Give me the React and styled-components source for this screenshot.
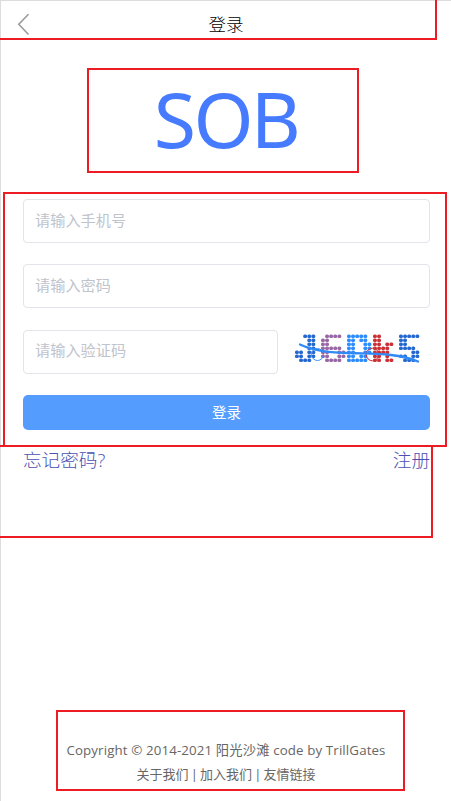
import React from "react";
import styled, { createGlobalStyle } from "styled-components";

const RED = "#ed1c24";

const GlobalStyle = createGlobalStyle`
  *, *::before, *::after { box-sizing: border-box; }
  body {
    margin: 0;
    background: #fff;
    font-family: "Open Sans", "Noto Sans CJK SC", sans-serif;
  }
`;

const Page = styled.main`
  width: 451px;
  height: 801px;
  overflow: hidden;
  display: flex;
  flex-direction: column;
  background:
    linear-gradient(#dcdcdc, #dcdcdc) 0 0 / 100% 1px no-repeat,
    linear-gradient(#dcdcdc, #dcdcdc) 0 0 / 1px 100% no-repeat,
    #fff;
`;

const Header = styled.header`
  width: 437px;
  height: 40px;
  flex: none;
  display: grid;
  grid-template-columns: 48px 1fr 31px;
  align-items: center;
  padding-top: 9px;
  border: solid ${RED};
  border-width: 0 2px 2px 0;
`;

const BackButton = styled.button`
  display: flex;
  padding: 0 0 0 17px;
  border: 0;
  background: none;
`;

const Title = styled.h1`
  margin: 0;
  text-align: center;
  font-size: 17.5px;
  line-height: 28px;
  font-weight: 300;
  color: #000;
`;

const LogoFrame = styled.section`
  width: 272px;
  height: 105px;
  flex: none;
  margin: 28px 0 0 87px;
  padding: 0 0 4px 6px;
  display: flex;
  align-items: center;
  justify-content: center;
  border: 2px solid ${RED};
`;

const Logo = styled.span`
  font-family: "Noto Sans", sans-serif;
  font-size: 77px;
  line-height: 97px;
  letter-spacing: -2.7px;
  color: #467bff;
`;

const Form = styled.form`
  width: 444px;
  height: 255px;
  flex: none;
  margin: 19px 0 0 3px;
  padding: 5px 15px 0 18px;
  border: 2px solid ${RED};
`;

const Field = styled.input`
  display: block;
  width: ${(p) => p.$width || "100%"};
  height: 44px;
  flex: none;
  margin: 0 0 21.3px;
  padding: 0 11px 5px;
  border: 1px solid #e2e4ea;
  border-radius: 4px;
  outline: 0;
  background: #fff;
  font: 15.2px "Noto Sans CJK SC", sans-serif;
  &::placeholder { color: #c0c4cc; opacity: 1; }
`;

const CaptchaRow = styled.div`
  display: flex;
  align-items: flex-start;
  gap: 14px;
`;

const SubmitButton = styled.button`
  display: block;
  width: 100%;
  height: 35px;
  padding: 0 0 1px;
  border: 0;
  border-radius: 5px;
  background: #549dff;
  color: #fff;
  font: 14.5px/34px "Noto Sans CJK SC", sans-serif;
`;

const Links = styled.nav`
  width: 433px;
  height: 93px;
  flex: none;
  margin-top: -2px;
  padding: 0 1px 0 23px;
  display: flex;
  justify-content: space-between;
  align-items: flex-start;
  border: solid ${RED};
  border-width: 2px 2px 2px 0;
`;

const TextLink = styled.a`
  font-size: 18.6px;
  line-height: 26px;
  font-weight: 300;
  color: #4a50b4;
`;

const Footer = styled.footer`
  width: 349px;
  height: 81px;
  flex: none;
  margin: 172px 0 0 56px;
  padding: 26px 9px 0 0;
  border: 2px solid ${RED};
  text-align: center;
  color: #666;
`;

const FooterLine = styled.p`
  margin: 0;
  font-size: ${(p) => p.$size || "13px"};
  line-height: 24px;
  white-space: nowrap;
  letter-spacing: ${(p) => p.$spacing || "0"};
  word-spacing: ${(p) => p.$wordSpacing || "0"};
`;

const GLYPHS = [
  { x: 3, color: "#2468cf", rows: ["..###", "...##", "...##", "...##", "##.##", "##.##", ".###."] },
  { x: 29, color: "#9868a5", rows: [".####.", "##....", "##....", "#####.", "##..##", "##..##", ".####."] },
  { x: 55, color: "#2d8cff", rows: ["#####.", "##.##.", "##..##", "##..##", "##..##", "##.##.", "#####."] },
  { x: 81, color: "#cb3035", rows: ["##...", "##...", "##.##", "####.", "####.", "##.#.", "##.##"] },
  { x: 107, color: "#2468cf", rows: ["#####", "##...", "##...", "####.", "...##", "##.##", ".###."] },
];

function Captcha() {
  return (
    <svg width="132" height="38" viewBox="0 0 132 38" role="img" aria-label="J6Dk5">
      {GLYPHS.map((glyph, g) =>
        glyph.rows.map((row, y) =>
          [...row].map((dot, x) =>
            dot === "#" ? (
              <rect
                key={`${g}-${y}-${x}`}
                x={glyph.x + x * 4.1}
                y={4.6 + y * 4}
                width="3.9"
                height="3.5"
                rx="1.5"
                fill={glyph.color}
              />
            ) : null
          )
        )
      )}
      <circle cx="25.5" cy="24.5" r="6" fill="none" stroke="#3c8ff0" strokeWidth="1" />
      <circle cx="80.5" cy="24.5" r="6.3" fill="none" stroke="#cb3035" strokeWidth="1" />
      <path d="M8 14.5 C22 21 40 23 58 23 C82 24 105 23 126 31.5" fill="none" stroke="#3089f5" strokeWidth="2.3" strokeLinecap="round" />
    </svg>
  );
}

export default function App() {
  return (
    <>
      <GlobalStyle />
      <Page>
        <Header>
          <BackButton aria-label="返回">
            <svg width="13" height="24" viewBox="0 0 13 24" fill="none" stroke="#9b9b9b" strokeWidth="1.6">
              <path d="M11.5 2.2 L1.8 12.3 L11.5 22.5" />
            </svg>
          </BackButton>
          <Title>登录</Title>
        </Header>
        <LogoFrame>
          <Logo>SOB</Logo>
        </LogoFrame>
        <Form>
          <Field placeholder="请输入手机号" />
          <Field type="password" placeholder="请输入密码" />
          <CaptchaRow>
            <Field placeholder="请输入验证码" $width="255px" />
            <Captcha />
          </CaptchaRow>
          <SubmitButton type="button">登录</SubmitButton>
        </Form>
        <Links>
          <TextLink>忘记密码?</TextLink>
          <TextLink>注册</TextLink>
        </Links>
        <Footer>
          <FooterLine $size="13.3px" $spacing="0.13px">Copyright © 2014-2021 阳光沙滩 code by TrillGates</FooterLine>
          <FooterLine $wordSpacing="-1.2px">关于我们 | 加入我们 | 友情链接</FooterLine>
        </Footer>
      </Page>
    </>
  );
}
